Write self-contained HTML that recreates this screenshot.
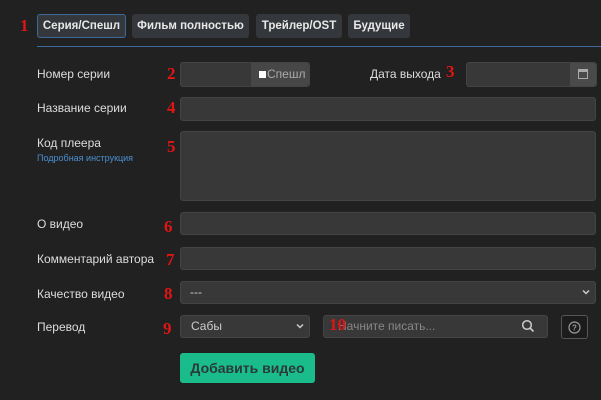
<!DOCTYPE html>
<html><head><meta charset="utf-8"><style>
*{box-sizing:border-box;margin:0;padding:0}
body{width:601px;height:400px;background:#212121;font-family:"Liberation Sans",sans-serif;color:#ddd;position:relative;overflow:hidden;font-size:12px}
.a{position:absolute}
.tab{position:absolute;top:14px;height:24px;background:#34373b;border-radius:3px;color:#e8e8e8;font-weight:bold;font-size:11.5px;line-height:24px;text-align:center}
.num{position:absolute;color:#e01515;font-family:"Liberation Serif",serif;font-weight:bold;font-size:17px}
.lbl{position:absolute;left:37px;font-size:12px;color:#ddd}
.inp{position:absolute;background:#383838;border:1px solid #444;border-radius:3px}
</style></head><body>
<div class="num" style="left:20px;top:16px">1</div>
<div class="tab" style="left:37px;width:89px;border:1px solid #3d6a9a;line-height:22px">Серия/Спешл</div>
<div class="tab" style="left:132px;width:117px">Фильм полностью</div>
<div class="tab" style="left:256px;width:86px">Трейлер/OST</div>
<div class="tab" style="left:348px;width:62px">Будущие</div>
<div class="a" style="left:37px;top:46px;width:564px;height:1px;background:#3d6a9a"></div>

<div class="lbl" style="top:67px">Номер серии</div>
<div class="num" style="left:167px;top:64px">2</div>
<div class="inp" style="left:180px;top:62px;width:130px;height:25px;background:#383838"></div>
<div class="a" style="left:251px;top:63px;width:58px;height:23px;background:#474747;border-radius:0 3px 3px 0;color:#aaa;font-size:12px;line-height:23px;padding-left:8px"><span style="display:inline-block;width:7px;height:7px;background:#fff;margin-right:1px"></span>Спешл</div>
<div class="lbl" style="left:370px;top:67px">Дата выхода</div>
<div class="num" style="left:446px;top:62px">3</div>
<div class="inp" style="left:466px;top:62px;width:131px;height:25px"></div>
<div class="a" style="left:570px;top:63px;width:26px;height:23px;background:#4a4a4a;border-radius:0 3px 3px 0"></div>
<div class="a" style="left:578px;top:69px;width:10px;height:10px;border:1px solid #aaa;border-top-width:3px"></div>

<div class="lbl" style="top:101px">Название серии</div>
<div class="num" style="left:167px;top:98px">4</div>
<div class="inp" style="left:180px;top:97px;width:416px;height:24px"></div>

<div class="lbl" style="top:136px">Код плеера</div>
<div class="a" style="left:37px;top:153px;font-size:9px;color:#4a8fd0">Подробная инструкция</div>
<div class="num" style="left:167px;top:137px">5</div>
<div class="inp" style="left:180px;top:131px;width:416px;height:70px"></div>

<div class="lbl" style="top:217px">О видео</div>
<div class="num" style="left:164px;top:217px">6</div>
<div class="inp" style="left:180px;top:212px;width:416px;height:23px"></div>

<div class="lbl" style="top:252px">Комментарий автора</div>
<div class="num" style="left:166px;top:250px">7</div>
<div class="inp" style="left:180px;top:247px;width:416px;height:23px"></div>

<div class="lbl" style="top:287px">Качество видео</div>
<div class="num" style="left:164px;top:284px">8</div>
<div class="inp" style="left:180px;top:281px;width:416px;height:23px;color:#ccc;font-size:12px;line-height:21px;padding-left:9px">---</div>
<svg class="a" style="left:582px;top:289px" width="8" height="6" viewBox="0 0 8 6"><path d="M1 1.5L4 4.5L7 1.5" fill="none" stroke="#ccc" stroke-width="1.5"/></svg>

<div class="lbl" style="top:320px">Перевод</div>
<div class="num" style="left:163px;top:319px">9</div>
<div class="inp" style="left:180px;top:315px;width:130px;height:23px;color:#ccc;line-height:21px;padding-left:10px">Сабы</div>
<svg class="a" style="left:296px;top:323px" width="8" height="6" viewBox="0 0 8 6"><path d="M1 1.5L4 4.5L7 1.5" fill="none" stroke="#ccc" stroke-width="1.5"/></svg>
<div class="inp" style="left:323px;top:315px;width:225px;height:23px;color:#888;line-height:21px;padding-left:14px">Начните писать...</div>
<div class="num" style="left:329px;top:315px">10</div>
<svg class="a" style="left:521px;top:319px" width="14" height="14" viewBox="0 0 14 14"><circle cx="6" cy="6" r="4.3" fill="none" stroke="#ccc" stroke-width="1.5"/><line x1="9" y1="9" x2="12.5" y2="12.5" stroke="#ccc" stroke-width="1.6"/></svg>
<div class="a" style="left:561px;top:315px;width:27px;height:24px;border:1px solid #555;border-radius:3px;background:#1c1c1c"></div>
<svg class="a" style="left:568px;top:321px" width="13" height="13" viewBox="0 0 13 13"><circle cx="6.5" cy="6.5" r="5.5" fill="none" stroke="#999" stroke-width="1.2"/><text x="6.5" y="9.5" font-size="8" fill="#999" text-anchor="middle" font-family="Liberation Sans" font-weight="bold">?</text></svg>

<div class="a" style="left:180px;top:353px;width:135px;height:30px;background:#1abc8c;border-radius:3px;color:#2a3a36;font-weight:bold;font-size:14px;line-height:30px;text-align:center">Добавить видео</div>
</body></html>
